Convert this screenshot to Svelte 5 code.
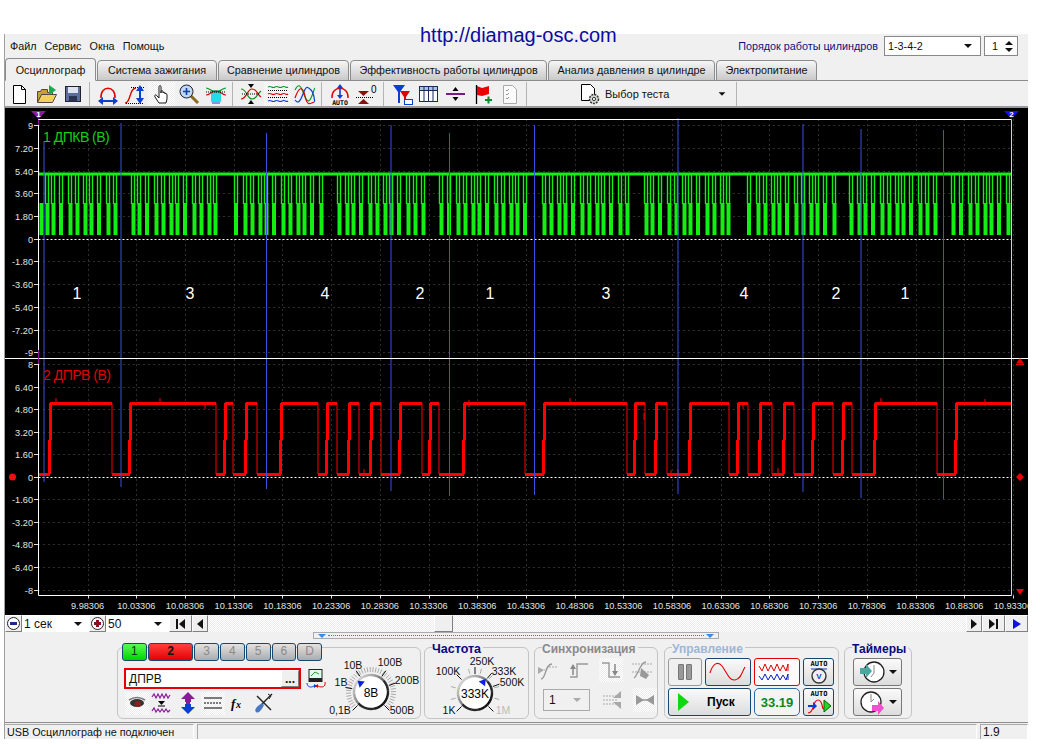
<script>
	const menu = ['Файл', 'Сервис', 'Окна', 'Помощь'];
	const tabs = [
		['Осциллограф', 91],
		['Система зажигания', 120],
		['Сравнение цилиндров', 131],
		['Эффективность работы цилиндров', 197],
		['Анализ давления в цилиндре', 167],
		['Электропитание', 101]
	];

	// toolbar and button icons, drawn at 1:1 in a 24px box
	const tri = (p, c) => `<path d="${p}" fill="${c}"/>`;
	const icons = {
		doc: '<path d="M6.5 3.5h8l4 4v14h-12z" fill="#fff" stroke="#000"/><path d="M14.5 3.5v4h4" fill="none" stroke="#000"/>',
		open: '<path d="M3.5 20V9.5h3l1-2h6v3h5v2" fill="#c8a030" stroke="#544"/><path d="M3.5 20.5l4-8h15l-4 8z" fill="#f2d060" stroke="#544"/><path d="M15 3l7 5-7 5z" fill="#1ea84a"/>',
		save: '<rect x="4.5" y="4.5" width="15" height="15" fill="#5b6c9e" stroke="#223"/><rect x="7" y="5" width="10" height="6" fill="#dfe3ee"/><rect x="8" y="14" width="8" height="5.5" fill="#2a3350"/>',
		archH: '<path d="M5 16C4 3 20 3 19 16" fill="none" stroke="#e00000" stroke-width="1.5"/><path d="M6 19h12" stroke="#0a3fd0" stroke-width="2"/>' + tri('M2 19l5-4v8z', '#0a3fd0') + tri('M22 19l-5-4v8z', '#0a3fd0'),
		archV: '<path d="M2 21c6 0 4-15 11-15" fill="none" stroke="#e00000" stroke-width="1.4"/><path d="M8 5.5h13M3 21.5h17" stroke="#000" stroke-dasharray="1 1"/><path d="M17 7v11" stroke="#0a3fd0" stroke-width="2"/>' + tri('M17 3l4 6h-8z', '#0a3fd0') + tri('M17 22l4-6h-8z', '#0a3fd0'),
		hand: '<path d="M9 21l-4-6c-1-2 1-3 2-1l2 2V5c0-2 2-2 2 0v6-1c0-2 2-2 2 0v1c0-1 2-1 2 0v1c0-1 2-1 2 1v4l-1 4z" fill="#fff" stroke="#000" stroke-width=".9"/>',
		zoom: '<path d="M14 14l7 7" stroke="#8a6a20" stroke-width="3"/><circle cx="9.5" cy="9.5" r="6.5" fill="#bcd8f4" stroke="#223"/><path d="M6 9.5h7M9.5 6v7" stroke="#123fa0" stroke-width="1.6"/>',
		band: '<rect x="7" y="8" width="10" height="12" fill="#22dce8"/><path d="M2 6c4 0 5 4 10 4s6-4 10-4" fill="none" stroke="#0a9a20" stroke-width="1.2"/><path d="M2 13c4 0 5-4 10-4s6 4 10 4" fill="none" stroke="#e00000" stroke-width="1.2"/><path d="M2 10h20" stroke="#000" stroke-dasharray="1 1"/><path d="M8 21h8" stroke="#0a3fd0"/>',
		cross: '<path d="M2 7c6 0 6 10 11 10s4-4 9-8" fill="none" stroke="#0a9a20" stroke-width="1.2"/><path d="M2 17c6 0 6-10 11-10s4 4 9 8" fill="none" stroke="#e00000" stroke-width="1.2"/><path d="M3 12h18" stroke="#000" stroke-dasharray="1 1"/>' + tri('M12 6L9 2h6z', '#000') + tri('M12 18l-3 4h6z', '#000'),
		split: '<path d="M2 5c3-2 4 2 7 0s4 2 7 0 4 2 6 0" fill="none" stroke="#0a9a20" stroke-width="1.2"/><path d="M2 12c3-2 4 2 7 0s4 2 7 0 4 2 6 0" fill="none" stroke="#e00000" stroke-width="1.2"/><path d="M2 19c3-2 4 2 7 0s4 2 7 0 4 2 6 0" fill="none" stroke="#0a3fd0" stroke-width="1.2"/><path d="M2 8.5h20M2 15.5h20" stroke="#000" stroke-dasharray="1 1"/>',
		overlay: '<path d="M2 8c3-6 5-6 8 2s5 12 8 6 3-10 4-10" fill="none" stroke="#0a9a20" stroke-width="1.2"/><path d="M2 18c3 4 5 2 8-6s4-8 8-4 3 12 4 12" fill="none" stroke="#0a3fd0" stroke-width="1.2"/><path d="M2 16c4-12 8-12 10-2s5 8 9 6" fill="none" stroke="#e00000" stroke-width="1.2"/>',
		autoV: '<path d="M4 16C3 3 21 3 20 16" fill="none" stroke="#e00000" stroke-width="1.4"/><path d="M12 5v9" stroke="#0a3fd0" stroke-width="1.6"/>' + tri('M12 2l3 4H9z', '#0a3fd0') + tri('M12 17l3-4H9z', '#0a3fd0') + '<text x="12" y="23" text-anchor="middle" font-family="DejaVu Sans Mono" font-size="6.5" font-weight="700">AUTO</text>',
		zeroY: tri('M3 9h11l-5.5 5z', '#8a1010') + tri('M3 22h11l-5.5-5z', '#8a1010') + '<path d="M1 15.5h18" stroke="#000" stroke-dasharray="1 1"/><text x="16" y="11" font-family="Liberation Sans" font-size="10">0</text>',
		marker: tri('M3 3h12l-5 7v11H8V10z', '#0a3fd0') + tri('M10 9h10l-4 6v6h-2v-6z', '#e00000') + '<rect x="14.5" y="17.5" width="8" height="5" fill="#fff" stroke="#0a3fd0"/>',
		table: '<rect x="2.5" y="4.5" width="18" height="15" fill="#fff" stroke="#1a2a5a"/><rect x="3" y="5" width="17" height="3.5" fill="#a8c4ea"/><path d="M2.5 8.5h18M7 5v14M11.5 5v14M16 5v14" stroke="#1a2a5a"/>',
		level: '<path d="M2 12h19" stroke="#7a1a8a" stroke-width="2"/>' + tri('M11.5 5l3 4h-6z', '#000') + tri('M11.5 19l3-4h-6z', '#000'),
		flag: '<path d="M5.5 3v19" stroke="#000" stroke-width="1.3"/><path d="M6 4l5 2 7-2v8l-7 2-5-1z" fill="#ee0000"/><path d="M14 18h7M17.5 14.5v7" stroke="#0a8a2a" stroke-width="2"/>',
		check: '<path d="M5.5 3.5h9l4 4v14h-13z" fill="#fafafa" stroke="#aaa"/><path d="M8 8l1 1 2-2M8 12l1 1 2-2M8 16l1 1 2-2" fill="none" stroke="#999"/>',
		testDoc: '<path d="M3.5 2.5h9l4 4v12h-13z" fill="#fff" stroke="#000"/><circle cx="16" cy="17" r="4.5" fill="#cfd8d0" stroke="#333" stroke-width="1.5" stroke-dasharray="2 1"/><circle cx="16" cy="17" r="1.6" fill="#fff" stroke="#333"/>',
		meter: '<rect x="5" y="2.5" width="13" height="12" fill="#dfe" stroke="#222"/><path d="M7 9l4-4 4 2" fill="none" stroke="#393" /><rect x="5" y="11" width="13" height="3.5" fill="#222"/><path d="M3 16c0 4 4 5 7 3" fill="none" stroke="#0a3fd0"/>' + tri('M10 17v4l3-2z', '#0a3fd0') + '<path d="M21 15c1 5-3 6-7 4" fill="none" stroke="#e00000"/>' + tri('M14 17v4l-3-2z', '#e00000'),
		eye: '<ellipse cx="12" cy="12" rx="7" ry="4" fill="#333"/><circle cx="13" cy="13" r="3" fill="#8a2020"/><path d="M4 9c5-3 11-3 16 0" fill="none" stroke="#777" stroke-width="1.5"/>',
		waves: '<path d="M2 6l2-3 2 4 2-4 2 4 2-4 2 4 2-4 2 4 2-3" fill="none" stroke="#8a1a9a" stroke-width="1.2"/>' + tri('M8 10h7l-3.5 4z', '#000') + '<path d="M8 15h7" stroke="#000"/><path d="M2 20l2-3 2 4 2-3 2 3 2-3 2 3 2-3 2 3 2-2" fill="none" stroke="#8a1a9a" stroke-width="1.2"/>',
		updown: '<path d="M12 8v9" stroke="#8a1a9a" stroke-width="4"/>' + tri('M12 1l7 7h-4v3H9V8H5z', '#8a1a9a') + tri('M12 23l7-7h-4v-3H9v3H5z', '#0a3fd0'),
		lines: '<path d="M3 7h18M3 17h18" stroke="#000"/><path d="M3 12h18" stroke="#000" stroke-dasharray="2 1"/>',
		fx: '<text x="5" y="17" font-family="Liberation Serif" font-style="italic" font-weight="700" font-size="13">f</text><text x="10" y="17" font-family="Liberation Serif" font-style="italic" font-weight="700" font-size="10">x</text>',
		tools: '<path d="M5 5l14 14" stroke="#222" stroke-width="1.4"/><path d="M20 3L10 13" stroke="#222" stroke-width="1.4"/><path d="M16 3l3 2-2 3" fill="none" stroke="#222"/><path d="M4 21c-2-2 0-5 6-9l2 2c-3 6-6 9-8 7z" fill="#4a78c0"/>'
	};

	const leftTools = [
		'doc', 'open', 'save', '|', 'archH', 'archV', 'hand!', 'zoom', 'band', '|', 'cross', 'split!', 'overlay', '|', 'autoV', 'zeroY', '|', 'marker', 'table', 'level', 'flag', 'check', '|'
	];

	// chart: everything below is in page pixels through the viewBox
	const X0 = 38.5, X1 = 1011.5, TOP = 119.5, MID = 358.5, BOT = 595.5;
	const ch1 = [['9', 125], ['7.20', 148], ['5.40', 171], ['3.60', 193], ['1.80', 216], ['0', 239], ['-1.80', 261], ['-3.60', 284], ['-5.40', 307], ['-7.20', 330], ['-9', 352]];
	const ch2 = [['8', 364], ['6.40', 387], ['4.80', 409], ['3.20', 432], ['1.60', 454], ['0', 477], ['-1.60', 499], ['-3.20', 522], ['-4.80', 544], ['-6.40', 567], ['-8', 590]];
	const times = Array.from({ length: 20 }, (_, i) => ({
		x: 87.6 + i * 48.7,
		t: (9.98306 + i * 0.05).toFixed(5)
	}));
	const cursors = [
		[44, 141, 482], [121, 123, 487], [266.5, 133, 489], [391, 125, 491], [449.5, 133, 496],
		[534.5, 125, 495], [678, 118, 494], [803, 124, 492], [861, 129, 498], [943.5, 130, 499]
	];
	const cylinders = [['1', 77], ['3', 190], ['4', 325], ['2', 420], ['1', 490], ['3', 606], ['4', 744], ['2', 836], ['1', 905]];

	// red cam signal: alternating rise/fall edges
	const edges = [50, 112, 130, 216, 225, 233, 246, 257, 281, 318, 327, 337, 349, 359, 371, 381, 400, 422, 430, 439, 464, 525, 544, 627, 635, 645, 656, 667, 690, 729, 738, 748, 760, 772, 784, 794, 813, 833, 843, 852, 875, 937, 956];
	let thick = '', thin = '', level = 474.5, prev = 39;
	edges.forEach((x, i) => {
		thick += `M${prev} ${level}H${x}`;
		if (i % 2 === 0) {
			thick += `M${x - 0.5} 474V440M${x + 0.5} 440V403`;
			level = 403.5;
		} else {
			thin += `M${x} 403V474`;
			level = 474.5;
		}
		prev = x;
	});
	thick += `M${prev} ${level}H1011`;
	const spikes = [[56, 398], [160, 398], [205, 402], [364, 469], [469, 400], [570, 398], [644, 413], [671, 470], [678, 469], [778, 468], [881, 398], [985, 399], [743, 402]];

	// green crank signal: teeth with a flat gap every revolution
	const gaps = [122, 224.5, 327, 429.5, 532, 634.5, 737, 839.5, 942];
	let bars = 'M41.5 203V235', slots = '';
	let tx = 47, n = 0;
	while (tx < 1009) {
		if (gaps.some((g) => tx > g - 2 && tx < g + 11)) {
			tx += 1;
			continue;
		}
		const at = Math.round(tx);
		bars += `M${at + (n % 5 === 2 ? 0 : 0.5)} 203V235`;
		slots += `M${at - 1.5} 175V204M${at + 1.5} 175V204`;
		tx += 6.2 + ((n * 7) % 5) * 0.7;
		n += 1;
	}

	// knobs
	const ring = (cx, cy, r) => {
		const out = [];
		for (let a = 0; a < 360; a += 12) {
			const rad = (a * Math.PI) / 180;
			const rad2 = ((a + 13) * Math.PI) / 180;
			const light = Math.round(110 + 95 * Math.cos(((a - 305) * Math.PI) / 180));
			const grey = a > 40 && a < 220 ? Math.min(light, 40) : light;
			out.push({
				d: `M${cx + r * Math.sin(rad)} ${cy - r * Math.cos(rad)}L${cx + r * Math.sin(rad2)} ${cy - r * Math.cos(rad2)}`,
				c: `rgb(${grey},${grey},${grey})`
			});
		}
		return out;
	};
	const spoke = (cx, cy, a, r1, r2) => {
		const rad = (a * Math.PI) / 180;
		return `M${cx + r1 * Math.sin(rad)} ${cy - r1 * Math.cos(rad)}L${cx + r2 * Math.sin(rad)} ${cy - r2 * Math.cos(rad)}`;
	};
	const arcAngles = (step) => {
		const list = [];
		for (let a = -135; a <= 135; a += step) list.push(a);
		return list;
	};

	const voltKnob = {
		cx: 50, cy: 34, value: '8В', step: 7, pointer: -50, size: 12,
		majors: [-135, -80, -35, 35, 70, 135],
		labels: [
			['0,1В', 19, 56], ['1В', 20, 28], ['10В', 32, 11], ['100В', 69, 8], ['200В', 86, 26], ['500В', 81, 56]
		]
	};
	const freqKnob = {
		cx: 50, cy: 35, value: '333K', step: 30, pointer: 37, size: 12,
		majors: [-135, -45, 0, 40, 70, 135],
		labels: [
			['1K', 24, 56], ['100K', 23, 17], ['250K', 57, 7], ['333K', 79, 17], ['500K', 87, 28], ['1M', 78, 56, '#bbb']
		]
	};

	const channels = [
		['1', 'on1'], ['2', 'on2'], ['3', ''], ['4', ''], ['5', ''], ['6', ''], ['D', '']
	];
</script>

{#snippet icon(name, size = 24)}
	<svg width={size} height={size} viewBox="0 0 24 24">{@html icons[name]}</svg>
{/snippet}

{#snippet knob(k)}
	<svg class="knob" width="104" height="62" viewBox="0 0 104 62">
		{#each arcAngles(k.step) as a}
			<path d={spoke(k.cx, k.cy, a, 20, 25)} stroke="#aaa" />
		{/each}
		{#each k.majors as a}
			<path d={spoke(k.cx, k.cy, a, 19, 26)} stroke="#111" />
		{/each}
		{#each ring(k.cx, k.cy, 17) as seg}
			<path d={seg.d} stroke={seg.c} stroke-width="2.500" />
		{/each}
		<circle cx={k.cx} cy={k.cy} r="15.5" fill="#fff" />
		<g transform="rotate({k.pointer} {k.cx} {k.cy})">
			<path d="M{k.cx - 4} {k.cy - 11.5}h8l-4 -6z" fill="#0a20e0" />
		</g>
		<text x={k.cx} y={k.cy + 4.5} text-anchor="middle" font-size={k.size}>{k.value}</text>
		{#each k.labels as [t, x, y, c]}
			<text {x} {y} text-anchor="middle" class="knob-label" fill={c || '#111'}>{t}</text>
		{/each}
	</svg>
{/snippet}

<div class="page">
	<span class="url">http://diamag-osc.com</span>
	<div class="window">
		<div class="menubar">
			{#each menu as item}<span>{item}</span>{/each}
			<span class="order">Порядок работы цилиндров</span>
			<div class="combo order-combo"><b>1-3-4-2</b><i class="caret"></i></div>
			<div class="spin">1<em><i class="up"></i><i class="caret"></i></em></div>
		</div>

		<div class="tabs">
			{#each tabs as [label, w], i}
				<div class="tab" class:active={i === 0} style:width="{w}px">{label}</div>
			{/each}
		</div>

		<div class="toolbar">
			{#each leftTools as tool}
				{#if tool === '|'}
					<span class="sep"></span>
				{:else}
					<span class="tool" class:dither={tool.endsWith('!')}>{@render icon(tool.replace('!', ''))}</span>
				{/if}
			{/each}
			<div class="test-select">
				{@render icon('testDoc')}
				<span>Выбор теста</span>
				<i class="caret"></i>
			</div>
			<span class="sep"></span>
		</div>

		<svg class="chart" width="1023" height="507" viewBox="5 108 1023 507">
			<rect x="5" y="108" width="1023" height="507" fill="#000" />
			<g stroke="#5c5c5c" stroke-dasharray="1 4">
				{#each [...ch1, ...ch2] as [t, y]}
					{#if t !== '0'}<path d="M{X0} {y + 0.5}H{X1}" />{/if}
				{/each}
				{#each times as tk}
					<path d="M{Math.round(tk.x) + 0.5} {TOP}V{BOT}" />
				{/each}
			</g>
			<g class="axis" text-anchor="end">
				{#each [...ch1, ...ch2] as [t, y]}
					<path d="M34 {y + 0.5}h4" stroke="#ddd" />
					<text x="33" y={y + 4}>{t}</text>
				{/each}
			</g>
			<g class="axis times" text-anchor="middle">
				{#each times as tk}
					<path d="M{Math.round(tk.x) + 0.5} {BOT}v3" stroke="#ddd" />
					<text x={tk.x} y="609">{tk.t}</text>
				{/each}
			</g>

			<path d="M{X0} 239.5H{X1}M{X0} 477.5H{X1}" stroke="#fff" stroke-dasharray="2 2" />

			<path d="M39 174H1011" stroke="#13ee13" stroke-width="3" />
			<path d={slots} stroke="#13ee13" stroke-width="1.4" />
			<path d={bars} stroke="#13ee13" stroke-width="4" />

			<path d={thin} stroke="#f00" stroke-width="1" />
			<path d={thick} stroke="#f00" stroke-width="3" fill="none" />
			{#each spikes as [x, y]}
				<path d="M{x} {y}V{y + 7}" stroke="#f00" />
			{/each}

			{#each cursors as [x, y1, y2]}
				<path d="M{x} {y1}V{y2}" stroke="#3c50e0" />
			{/each}

			<path d="M{X0} {TOP}H{X1}M{X0} {BOT}H{X1}M{X0} {TOP}V{BOT}" stroke="#fff" />
			<path d="M{X1} {TOP}V{BOT}" stroke="#c8ccff" />
			<path d="M5 {MID}H1028" stroke="#fff" />
			<path d="M{X0} 120V125M{X0} 350V364" stroke="#8a1a9a" />

			<path d="M31 111h15l-7.5 8z" fill="#8a1a9a" />
			<text x="38.5" y="117" text-anchor="middle" class="flag-num">1</text>
			<path d="M1004 111h15l-7.5 8z" fill="#1010e8" />
			<text x="1011.5" y="117" text-anchor="middle" class="flag-num">2</text>

			<text x="43" y="141.5" class="trace" fill="#10d010">1 ДПКВ (В)</text>
			<text x="43" y="380" class="trace" fill="#e00000">2 ДПРВ (В)</text>
			{#each cylinders as [t, x]}
				<text {x} y="298.500" class="cyl" text-anchor="middle">{t}</text>
			{/each}

			<circle cx="12.5" cy="477" r="3.5" fill="#f01010" />
			<path d="M1020 358l4 5.500h-8zM1016 364h8v1h-8z" fill="#e80000" />
			<path d="M1020 473l4 4-4 4-4-4z" fill="#f00000" />
			<path d="M1016 589h8l-4 6z" fill="#f00000" />
		</svg>

		<div class="scrollrow">
			<button class="raised round" aria-label="меньше"><i class="dial minus"></i></button>
			<div class="combo flat w66"><b>1 сек</b><i class="caret"></i></div>
			<button class="raised round" aria-label="больше"><i class="dial plus"></i></button>
			<div class="combo flat w62"><b>50</b><i class="caret"></i></div>
			<button class="raised w23" aria-label="в начало"><i class="bar-left"></i><i class="arrow-left"></i></button>
			<button class="raised w16" aria-label="назад"><i class="arrow-left"></i></button>
			<div class="track"><div class="raised thumb"></div></div>
			<button class="raised w16" aria-label="вперёд"><i class="arrow-right"></i></button>
			<button class="raised w23" aria-label="в конец"><i class="arrow-right"></i><i class="bar-right"></i></button>
			<button class="raised w23" aria-label="пуск"><i class="arrow-right blue"></i></button>
		</div>

		<div class="splitter"><div class="split-box"><i class="mini"></i><span></span><i class="mini"></i></div></div>

		<div class="panel">
			<section class="group g-chan">
				<div class="chan-col">
					<div class="channels">
						{#each channels as [label, cls]}
							<div class="chan {cls}">{label}</div>
						{/each}
					</div>
					<div class="name-row">
						<div class="name-field">ДПРВ<span class="raised dots">...</span></div>
						<span class="meter">{@render icon('meter')}</span>
					</div>
					<div class="icon-row">
						<span class="dither boxed">{@render icon('eye')}</span>
						<span class="plain">{@render icon('waves')}</span>
						<span class="plain">{@render icon('updown')}</span>
						<span class="dither boxed">{@render icon('lines')}</span>
						<span class="plain">{@render icon('fx')}</span>
						<span class="plain">{@render icon('tools')}</span>
					</div>
				</div>
				{@render knob(voltKnob)}
			</section>

			<section class="group g-freq">
				<h3 class="big">Частота</h3>
				{@render knob(freqKnob)}
			</section>

			<section class="group g-sync">
				<h3 class="off">Синхронизация</h3>
				<div class="sync-row">
					<span>
						<svg width="24" height="24" viewBox="0 0 24 24"><path d="M2 12h7M13 9h9" stroke="#aaa" stroke-dasharray="2 1"/><path d="M5 21c5 0 4-15 11-15" fill="none" stroke="#999" stroke-width="1.3"/><path d="M2 9l6 3-6 4z" fill="#aaa"/></svg>
					</span>
					<span>
						<svg width="24" height="24" viewBox="0 0 24 24"><path d="M3 19h7V6h11" fill="none" stroke="#999" stroke-width="1.4"/><path d="M6 17V9" stroke="#888" stroke-width="1.5"/><path d="M6 6l3 5H3z" fill="#888"/></svg>
					</span>
					<span class="dither">
						<svg width="24" height="24" viewBox="0 0 24 24"><path d="M3 5h7v14h11" fill="none" stroke="#999" stroke-width="1.4"/><path d="M16 6v9" stroke="#888" stroke-width="1.5"/><path d="M16 18l3-5h-6z" fill="#888"/></svg>
					</span>
					<span>
						<svg width="24" height="24" viewBox="0 0 24 24"><path d="M2 6h20M2 14h20" stroke="#aaa" stroke-dasharray="2 1"/><path d="M4 20C8 18 10 4 16 4" fill="none" stroke="#999" stroke-width="1.3"/><path d="M11 10l8 7-3 4-6-3z" fill="#999"/></svg>
					</span>
				</div>
				<div class="sync-row second">
					<div class="combo off-combo"><b>1</b><i class="caret light"></i></div>
					<span>
						<svg width="24" height="24" viewBox="0 0 24 24"><path d="M2 8h14M2 12h14M2 16h14" stroke="#aaa" stroke-dasharray="2 1"/><path d="M20 10V3l-8 7zM20 14v7l-8-7z" fill="#a8a8a8"/></svg>
					</span>
					<span class="dither">
						<svg width="24" height="24" viewBox="0 0 24 24"><path d="M3 12h18" stroke="#999" stroke-width="1.5"/><path d="M11 12L3 7v10zM13 12l8-5v10z" fill="#999"/></svg>
					</span>
				</div>
			</section>

			<section class="group g-ctl">
				<h3 class="blue-off">Управление</h3>
				<div class="ctl-grid">
					<button class="ctl pause" aria-label="пауза"><i></i><i></i></button>
					<button class="ctl blue" aria-label="сигнал">
						<svg width="42" height="24" viewBox="0 0 42 24"><path d="M3 13C6 3 11 1 15 6S22 21 28 20 35 12 38 7" fill="none" stroke="#e00000" stroke-width="1.1"/></svg>
					</button>
					<button class="ctl red" aria-label="развёртка">
						<svg width="40" height="24" viewBox="0 0 40 24"><path d="M2 6l3 5 3-7 3 7 3-6 3 6 3-7 3 7 3-6 3 6 2-7v7" fill="none" stroke="#e00000"/><path d="M2 16l3 4 3-6 3 6 3-5 3 5 3-6 3 6 3-5 3 5 2-6v6" fill="none" stroke="#0a20c0"/></svg>
					</button>
					<button class="ctl blue" aria-label="авто">
						<svg width="26" height="26" viewBox="0 0 26 26"><text x="13" y="7" text-anchor="middle" font-family="DejaVu Sans Mono" font-size="7" font-weight="700">AUTO</text><path d="M5 10h16" stroke="#0a3fd0"/><circle cx="13" cy="17" r="7" fill="#eee" stroke="#333" stroke-width="1.4"/><text x="13" y="20" text-anchor="middle" font-family="Liberation Sans" font-size="8" fill="#0a3fd0">V</text></svg>
					</button>
					<button class="ctl blue start"><i class="play"></i>Пуск</button>
					<button class="ctl blue freq">33.19</button>
					<button class="ctl blue" aria-label="авто пуск">
						<svg width="26" height="26" viewBox="0 0 26 26"><text x="13" y="7" text-anchor="middle" font-family="DejaVu Sans Mono" font-size="7" font-weight="700">AUTO</text><path d="M2 24c7 0 4-13 10-13s3 13 7 7" fill="none" stroke="#e00000" stroke-width="1.2"/><path d="M2 17h5" stroke="#0a3fd0" stroke-width="2"/><path d="M7 13l4 4-4 4z" fill="#0a3fd0"/><path d="M18 11l7 6-7 6z" fill="#2bd02b" stroke="#060"/></svg>
					</button>
				</div>
			</section>

			<section class="group g-time">
				<h3>Таймеры</h3>
				<button class="ctl timer" aria-label="таймер 1">
					<svg width="26" height="26" viewBox="0 0 26 26"><circle cx="15" cy="13" r="10" fill="#fff" stroke="#222" stroke-width="1.3"/><path d="M15 6l0 8-3 4" fill="none" stroke="#888"/><path d="M1 9h6V5l6 7-6 7v-4H1z" fill="#4aa8a0"/></svg>
					<i class="caret"></i>
				</button>
				<button class="ctl timer" aria-label="таймер 2">
					<svg width="26" height="26" viewBox="0 0 26 26"><circle cx="12" cy="13" r="10" fill="#fff" stroke="#222" stroke-width="1.3"/><path d="M12 5l0 8 3-3" fill="none" stroke="#888"/><path d="M13 16h6v-4l6 7-6 7v-4h-6z" fill="#f050d0"/></svg>
					<i class="caret"></i>
				</button>
			</section>
		</div>

		<div class="status">
			<div class="cell first">USB Осциллограф не подключен</div>
			<div class="cell mid"></div>
			<div class="cell last">1.9</div>
		</div>
	</div>
</div>

<style>
	:global(body) {
		background: #fff;
		overflow: hidden;
	}

	.page {
		position: relative;
		width: 1040px;
		height: 744px;
		padding-top: 34px;
		box-sizing: border-box;
		font-family: 'Liberation Sans', 'Noto Sans', sans-serif;
		font-size: 10.800px;
		color: #111;
	}

	.url {
		position: absolute;
		left: 420px;
		top: 23px;
		z-index: 2;
		font-family: 'Liberation Sans', sans-serif;
		font-size: 20px;
		line-height: 24px;
		color: #0b0ba5;
	}

	.window {
		width: 1023px;
		margin-left: 4px;
		height: 705px;
		border-left: 1px solid #a0a0a0;
		background: #f0f0f0;
		display: flex;
		flex-direction: column;
	}

	.menubar {
		height: 24px;
		display: flex;
		align-items: center;
		gap: 8px;
		padding: 0 10px 0 5px;
		flex: none;
	}

	.order {
		margin-left: auto;
		color: #10107a;
		margin-right: -2px;
	}

	.combo {
		display: flex;
		align-items: center;
		background: #fff;
		box-sizing: border-box;
	}

	.combo b {
		font-weight: 400;
		flex: 1;
	}

	.order-combo {
		width: 97px;
		height: 20px;
		border: 1px solid #888;
		padding: 0 8px 0 3px;
		font-family: 'Liberation Sans', sans-serif;
	}

	.spin {
		width: 34px;
		height: 20px;
		margin-left: -5px;
		box-sizing: border-box;
		border: 1px solid #888;
		background: #fff;
		display: flex;
		align-items: center;
		justify-content: space-between;
		padding: 0 4px 0 7px;
	}

	.spin em {
		display: flex;
		flex-direction: column;
		gap: 3px;
	}

	.up {
		display: block;
		border-left: 4px solid transparent;
		border-right: 4px solid transparent;
		border-bottom: 4px solid #111;
	}

	.caret {
		display: inline-block;
		border-left: 4px solid transparent;
		border-right: 4px solid transparent;
		border-top: 4px solid #111;
	}

	.caret.light {
		border-top-color: #aaa;
	}

	.tabs {
		display: flex;
		gap: 1px;
		height: 23px;
		margin-bottom: -1px;
		position: relative;
		z-index: 1;
		flex: none;
	}

	.tab {
		box-sizing: border-box;
		margin-top: 2px;
		border: 1px solid #8c8c8c;
		border-radius: 4px 4px 0 0;
		background: linear-gradient(#f6f6f6, #c9c9c9);
		text-align: center;
		line-height: 19px;
	}

	.tab.active {
		margin-top: 0;
		background: #f0f0f0;
		border-bottom-color: #f0f0f0;
		line-height: 22px;
	}

	.toolbar {
		height: 28px;
		box-sizing: border-box;
		border-top: 1px solid #8c8c8c;
		border-bottom: 2px solid #999;
		display: flex;
		align-items: center;
		flex: none;
	}

	.tool {
		width: 27px;
		height: 24px;
		display: flex;
		align-items: center;
		justify-content: center;
	}

	.dither {
		background: repeating-conic-gradient(#fff 0 25%, #ececec 0 50%) 0 0 / 2px 2px;
	}

	.sep {
		width: 8px;
		height: 24px;
		position: relative;
	}

	.sep::after {
		content: '';
		position: absolute;
		left: 3px;
		top: 0;
		bottom: 0;
		width: 1px;
		background: #b4b4b4;
	}

	.test-select {
		width: 202px;
		display: flex;
		align-items: center;
		padding-left: 47px;
		box-sizing: border-box;
	}

	.test-select span {
		margin-left: 3px;
		flex: 1;
		font-size: 11px;
		padding-top: 1px;
	}

	.test-select .caret {
		margin-right: 7px;
		transform: scale(0.85);
	}

	.chart {
		display: block;
		flex: none;
	}

	.axis text {
		font-family: 'Liberation Sans', sans-serif;
		font-size: 9.200px;
		fill: #e0e6e2;
	}

	.flag-num {
		font: 700 8px 'Liberation Sans', sans-serif;
		fill: #fff;
	}

	.trace {
		font-family: 'Liberation Sans', sans-serif;
		font-size: 14px;
		letter-spacing: -0.5px;
	}

	.cyl {
		font-family: 'Liberation Sans', sans-serif;
		font-size: 16px;
		fill: #fff;
	}

	.scrollrow {
		height: 17px;
		display: flex;
		flex: none;
	}

	.raised {
		box-sizing: border-box;
		padding: 0;
		margin: 0;
		background: #efefef;
		border: 1px solid;
		border-color: #fff #808080 #808080 #fff;
		display: flex;
		align-items: center;
		justify-content: center;
		gap: 1px;
		flex: none;
	}

	.round {
		width: 17px;
	}

	.dial {
		width: 11px;
		height: 11px;
		border: 1px solid #222;
		border-radius: 50%;
		background: #fff;
		position: relative;
		display: block;
	}

	.dial::before {
		content: '';
		position: absolute;
		left: 2px;
		right: 2px;
		top: 4px;
		height: 3px;
		background: #1a2a90;
	}

	.plus::before {
		background: #8a1020;
	}

	.plus::after {
		content: '';
		position: absolute;
		top: 2px;
		bottom: 2px;
		left: 4px;
		width: 3px;
		background: #8a1020;
	}

	.flat {
		height: 17px;
		padding: 0 7px 0 2px;
		font-size: 12px;
		flex: none;
	}

	.w66 {
		width: 67px;
	}

	.w62 {
		width: 63px;
	}

	.w23 {
		width: 23px;
	}

	.w16 {
		width: 16px;
	}

	.arrow-left {
		border-top: 5px solid transparent;
		border-bottom: 5px solid transparent;
		border-right: 6px solid #111;
	}

	.arrow-right {
		border-top: 5px solid transparent;
		border-bottom: 5px solid transparent;
		border-left: 6px solid #111;
	}

	.arrow-right.blue {
		border-left: 8px solid #1010e8;
	}

	.bar-left,
	.bar-right {
		width: 2px;
		height: 10px;
		background: #111;
	}

	.track {
		flex: 1;
		background: repeating-conic-gradient(#fff 0 25%, #ececec 0 50%) 0 0 / 2px 2px;
		padding-left: 226px;
	}

	.thumb {
		width: 19px;
		height: 17px;
	}

	.splitter {
		height: 8px;
		padding-left: 308px;
		flex: none;
	}

	.split-box {
		width: 406px;
		height: 7px;
		box-sizing: border-box;
		border: 1px solid #aaa;
		display: flex;
		align-items: center;
		gap: 2px;
		padding: 0 4px;
	}

	.split-box span {
		flex: 1;
		border-top: 1px dotted #3a7ae0;
	}

	.mini {
		border-left: 4px solid transparent;
		border-right: 4px solid transparent;
		border-top: 4px solid #3a8ae8;
	}

	.panel {
		flex: 1;
		display: flex;
		align-items: flex-start;
		padding: 7px 0 0 112px;
		min-height: 0;
	}

	.group {
		height: 72px;
		box-sizing: border-box;
		border: 1px solid #c4c4c4;
		border-radius: 6px;
		flex: none;
	}

	.group h3 {
		margin: -7px 0 0 7px;
		width: fit-content;
		padding: 0 2px 0 0;
		background: #f0f0f0;
		font: 700 12px/16px 'Liberation Sans', sans-serif;
		color: #0a0a80;
	}

	.group h3.big {
		font-size: 12.500px;
	}

	.group h3.off {
		color: #8a8a8a;
	}

	.group h3.blue-off {
		color: #9db6d8;
	}

	.g-chan {
		width: 304px;
		display: flex;
		padding-left: 4px;
	}

	.chan-col {
		width: 200px;
		margin-top: -5px;
		flex: none;
	}

	.channels {
		display: flex;
		gap: 1px;
	}

	.chan {
		width: 26px;
		height: 18px;
		box-sizing: border-box;
		border: 1.5px solid #17466f;
		border-radius: 3px;
		background: linear-gradient(#e2e2e2, #acacac);
		color: #8a8a8a;
		font: 12px/15px 'Liberation Sans', sans-serif;
		text-align: center;
	}

	.on1 {
		background: linear-gradient(#55ff55, #00d400);
		color: #0a3a0a;
	}

	.on2 {
		width: 48px;
		background: linear-gradient(#ff4040, #e40000);
		color: #111;
		font-weight: 700;
	}

	.name-row {
		display: flex;
		align-items: center;
		margin: 7px 0 0 2px;
		height: 21px;
	}

	.name-field {
		width: 177px;
		height: 21px;
		box-sizing: border-box;
		border: 2px solid #e80000;
		background: #fff;
		display: flex;
		align-items: center;
		justify-content: space-between;
		padding: 0 0 0 3px;
		font-size: 12px;
		flex: none;
	}

	.dots {
		width: 18px;
		height: 17px;
		font-weight: 700;
		line-height: 8px;
	}

	.meter {
		display: flex;
		margin-left: 3px;
	}

	.icon-row {
		display: flex;
		align-items: center;
		margin-top: 2px;
		margin-left: 3px;
	}

	.boxed {
		width: 24px;
		height: 23px;
		display: flex;
		align-items: center;
		justify-content: center;
	}

	.plain {
		display: flex;
		width: 26px;
		justify-content: center;
	}

	.knob {
		display: block;
		margin: 10px 0 0 -1px;
		flex: none;
		overflow: visible;
	}

	.knob text {
		font-family: 'Liberation Sans', sans-serif;
	}

	.knob-label {
		font-size: 10.500px;
	}

	.g-freq {
		width: 105px;
		margin-left: 3px;
	}

	.g-freq .knob {
		margin: 1px 0 0 0;
	}

	.g-sync {
		width: 124px;
		margin-left: 5px;
	}

	.sync-row {
		display: flex;
		align-items: center;
		justify-content: space-between;
		padding: 0 3px 0 1px;
		margin-top: 1px;
	}

	.sync-row span {
		display: flex;
		width: 24px;
		height: 24px;
	}

	.sync-row.second {
		padding: 0 0 0 8px;
		margin-top: 6px;
		gap: 8px;
	}

	.off-combo {
		width: 47px;
		height: 22px;
		border: 1px solid #aaa;
		background: #f0f0f0;
		padding: 0 8px 0 5px;
		font-size: 12px;
		margin-right: 2px;
	}

	.g-ctl {
		width: 175px;
		margin-left: 6px;
	}

	.ctl-grid {
		display: grid;
		grid-template-columns: 34px 46px 46px 31px;
		grid-auto-rows: 28px;
		gap: 2px 3px;
		padding: 1px 0 0 3px;
	}

	.ctl {
		box-sizing: border-box;
		padding: 0;
		border: 1px solid #9a9a9a;
		border-radius: 3px;
		background: linear-gradient(#fafafa, #dcdcdc);
		display: flex;
		align-items: center;
		justify-content: center;
		font: 700 12px 'Liberation Sans', sans-serif;
	}

	.ctl.blue {
		border: 1.5px solid #17466f;
	}

	.ctl.red {
		border: 1.5px solid #e00000;
		background: #fbfbfb;
	}

	.pause {
		gap: 2px;
		background: #f0f0f0;
	}

	.pause i {
		width: 4px;
		height: 14px;
		background: #999;
		border: 1px solid #777;
		border-radius: 1px;
	}

	.start {
		grid-column: span 2;
		justify-content: flex-start;
		padding-left: 9px;
		gap: 18px;
	}

	.play {
		border-top: 9px solid transparent;
		border-bottom: 9px solid transparent;
		border-left: 11px solid #10d810;
	}

	.ctl.freq {
		color: #0a8a1a;
		font-size: 13px;
		background: #f4f4f4;
		border-radius: 5px;
		border-color: #2a6aa8;
	}

	.g-time {
		width: 68px;
		margin-left: 5px;
		display: flex;
		flex-direction: column;
		gap: 2px;
	}

	.g-time h3 {
		margin-bottom: -1px;
	}

	.timer {
		width: 49px;
		height: 28px;
		margin-left: 8px;
		gap: 4px;
		justify-content: flex-start;
		padding-left: 5px;
		border-color: #777;
		flex: none;
	}

	.status {
		height: 17px;
		border-top: 1px solid #8c8c8c;
		display: flex;
		padding-top: 1px;
		flex: none;
		box-sizing: border-box;
	}

	.cell {
		box-sizing: border-box;
		border-top: 1px solid #a8a8a8;
		border-left: 1px solid #a8a8a8;
		border-right: 1px solid #fff;
		line-height: 14px;
		padding-left: 2px;
	}

	.first {
		width: 189px;
		border-left: 0;
	}

	.mid {
		width: 780px;
		margin-left: 3px;
	}

	.last {
		flex: 1;
		margin-left: 3px;
		font-size: 12px;
	}
</style>
